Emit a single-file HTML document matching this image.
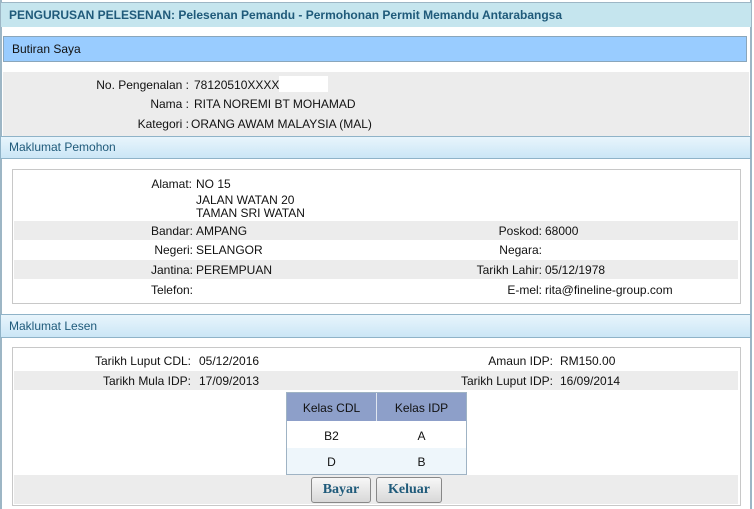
<!DOCTYPE html>
<html><head><meta charset="utf-8">
<style>
*{margin:0;padding:0;box-sizing:border-box}
body{width:754px;height:509px;background:#fff;font-family:"Liberation Sans",Arial,sans-serif;font-size:12px;color:#111;position:relative;overflow:hidden}
.a{position:absolute}
.t{white-space:nowrap}
.r{text-align:right}
.hdr{background:linear-gradient(#e8f5fc,#cbe6f6);border:1px solid #8fb3c8;color:#1f5a7a;font-size:12px;padding-left:8px;line-height:21px}
.g{background:#ececec}
</style></head><body>
<div class="a" style="left:0;top:0;width:2px;height:509px;background:#9db6c5"></div>
<div class="a" style="left:750px;top:0;width:2px;height:509px;background:#9db6c5"></div>

<div class="a" style="left:1px;top:2px;width:750px;height:25px;background:#c5e5ee;border-top:1px solid #9db6c5"></div>
<div class="a t" style="left:9px;top:8px;font-weight:bold;color:#1f5a7a;font-size:12px">PENGURUSAN PELESENAN: Pelesenan Pemandu - Permohonan Permit Memandu Antarabangsa</div>

<div class="a" style="left:3px;top:36px;width:744px;height:26px;background:#99ccff;border:1px solid #8aa6bb"></div>
<div class="a t" style="left:12px;top:42px">Butiran Saya</div>

<div class="a g" style="left:3px;top:72px;width:746px;height:64px"></div>
<div class="a t r" style="left:0;width:189px;top:78px">No. Pengenalan :</div>
<div class="a t" style="left:194px;top:78px">78120510XXXX</div>
<div class="a" style="left:279px;top:76px;width:49px;height:16px;background:#fff"></div>
<div class="a t r" style="left:0;width:189px;top:97px">Nama :</div>
<div class="a t" style="left:194px;top:97px">RITA NOREMI BT MOHAMAD</div>
<div class="a t r" style="left:0;width:189px;top:117px">Kategori :</div>
<div class="a t" style="left:191px;top:117px">ORANG AWAM MALAYSIA (MAL)</div>

<div class="a hdr" style="left:0;top:136px;width:751px;height:23px">Maklumat Pemohon</div>

<div class="a" style="left:12px;top:169px;width:729px;height:135px;border:1px solid #c8c8c8"></div>
<div class="a g" style="left:14px;top:221px;width:724px;height:19px"></div>
<div class="a g" style="left:14px;top:260px;width:724px;height:19px"></div>
<div class="a t r" style="left:0;width:192px;top:177px">Alamat:</div>
<div class="a t" style="left:196px;top:177px">NO 15</div>
<div class="a t" style="left:196px;top:194px;line-height:13px">JALAN WATAN 20<br>TAMAN SRI WATAN</div>
<div class="a t r" style="left:0;width:193px;top:224px">Bandar:</div>
<div class="a t" style="left:196px;top:224px">AMPANG</div>
<div class="a t r" style="left:0;width:193px;top:243px">Negeri:</div>
<div class="a t" style="left:196px;top:243px">SELANGOR</div>
<div class="a t r" style="left:0;width:193px;top:263px">Jantina:</div>
<div class="a t" style="left:196px;top:263px">PEREMPUAN</div>
<div class="a t r" style="left:0;width:193px;top:283px">Telefon:</div>
<div class="a t r" style="left:0;width:542px;top:224px">Poskod:</div>
<div class="a t" style="left:545px;top:224px">68000</div>
<div class="a t r" style="left:0;width:542px;top:243px">Negara:</div>
<div class="a t r" style="left:0;width:542px;top:263px">Tarikh Lahir:</div>
<div class="a t" style="left:545px;top:263px">05/12/1978</div>
<div class="a t r" style="left:0;width:542px;top:283px">E-mel:</div>
<div class="a t" style="left:545px;top:283px">rita@fineline-group.com</div>

<div class="a hdr" style="left:0;top:314px;width:751px;height:24px;line-height:22px">Maklumat Lesen</div>

<div class="a" style="left:12px;top:347px;width:729px;height:159px;border:1px solid #c8c8c8"></div>
<div class="a g" style="left:14px;top:371px;width:724px;height:19px"></div>
<div class="a t r" style="left:0;width:191px;top:354px">Tarikh Luput CDL:</div>
<div class="a t" style="left:199px;top:354px">05/12/2016</div>
<div class="a t r" style="left:0;width:191px;top:374px">Tarikh Mula IDP:</div>
<div class="a t" style="left:199px;top:374px">17/09/2013</div>
<div class="a t r" style="left:0;width:553px;top:354px">Amaun IDP:</div>
<div class="a t" style="left:560px;top:354px">RM150.00</div>
<div class="a t r" style="left:0;width:553px;top:374px">Tarikh Luput IDP:</div>
<div class="a t" style="left:560px;top:374px">16/09/2014</div>

<div class="a" style="left:286px;top:392px;width:181px;height:83px;border:1px solid #9fb3c4;background:#fff"></div>
<div class="a" style="left:287px;top:393px;width:179px;height:28px;background:#8d9fc9"></div>
<div class="a" style="left:376px;top:393px;width:1px;height:28px;background:#e0e6f0"></div>
<div class="a" style="left:287px;top:448px;width:179px;height:26px;background:#eef6fb"></div>
<div class="a t" style="left:287px;width:89px;text-align:center;top:401px">Kelas CDL</div>
<div class="a t" style="left:377px;width:89px;text-align:center;top:401px">Kelas IDP</div>
<div class="a t" style="left:287px;width:89px;text-align:center;top:429px">B2</div>
<div class="a t" style="left:377px;width:89px;text-align:center;top:429px">A</div>
<div class="a t" style="left:287px;width:89px;text-align:center;top:455px">D</div>
<div class="a t" style="left:377px;width:89px;text-align:center;top:455px">B</div>

<div class="a g" style="left:14px;top:475px;width:724px;height:29px"></div>
<div class="a" style="left:311px;top:477px;width:60px;height:26px;border:1px solid #888;border-radius:3px;background:linear-gradient(#f7f7f7,#d8d8d8);color:#1f5a7a;font-family:'Liberation Serif',serif;font-weight:bold;font-size:14px;text-align:center;line-height:24px">Bayar</div>
<div class="a" style="left:376px;top:477px;width:66px;height:26px;border:1px solid #888;border-radius:3px;background:linear-gradient(#f7f7f7,#d8d8d8);color:#1f5a7a;font-family:'Liberation Serif',serif;font-weight:bold;font-size:14px;text-align:center;line-height:24px">Keluar</div>
</body></html>
